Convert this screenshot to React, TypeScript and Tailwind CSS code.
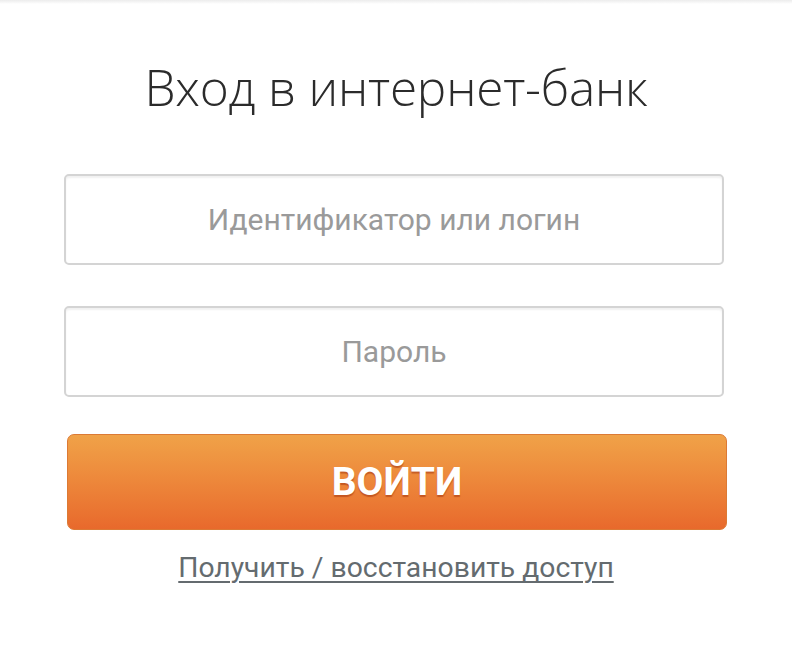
import React from "react";

export default function App() {
  return (
    <div className="relative h-[646px] w-[792px] overflow-hidden bg-white">
      {/* faint shadow along the top edge */}
      <div className="h-[4px] w-full bg-gradient-to-b from-[#ececec] to-white" />

      <div className="flex flex-col items-center px-[64px]">
        <h1
          className="mt-[47px] text-[49.5px] font-light leading-[72px] tracking-[-0.2px] text-[#2b2b2b]"
          style={{ fontFamily: '"Open Sans", sans-serif' }}
        >
          Вход в интернет-банк
        </h1>

        <div
          className="mt-[51px] flex w-full flex-col gap-[41px]"
          style={{ fontFamily: 'Roboto, "Noto Sans", sans-serif' }}
        >
          <input
            placeholder="Идентификатор или логин"
            className="h-[91px] w-[660px] rounded-[5px] border-2 border-[#d4d4d4] bg-white text-center text-[30px] text-[#333] shadow-[inset_0_2px_2px_rgba(0,0,0,0.06)] outline-none placeholder:text-[#9a9a9a]"
          />
          <input
            placeholder="Пароль"
            type="password"
            className="h-[91px] w-[660px] rounded-[5px] border-2 border-[#d4d4d4] bg-white text-center text-[30px] text-[#333] shadow-[inset_0_2px_2px_rgba(0,0,0,0.06)] outline-none placeholder:text-[#9a9a9a]"
          />
        </div>

        <button
          className="mt-[37px] ml-[2px] flex h-[96px] w-[660px] items-center justify-center rounded-[7px] border border-[#dc7a35] bg-gradient-to-b from-[#f0a248] to-[#e8692c] text-[39px] font-bold text-white [text-shadow:0_2px_1px_rgba(170,60,20,0.6)]"
          style={{ fontFamily: 'Roboto, "Noto Sans", sans-serif' }}
        >
          ВОЙТИ
        </button>

        <a
          href="#"
          className="mt-[19px] text-[28.3px] leading-[38px] text-[#646b6f] underline decoration-[2px] underline-offset-[4px]"
          style={{ fontFamily: 'Roboto, "Noto Sans", sans-serif' }}
        >
          Получить / восстановить доступ
        </a>
      </div>
    </div>
  );
}
